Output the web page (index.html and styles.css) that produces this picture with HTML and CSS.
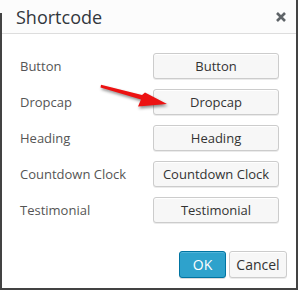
FILE: index.html
```html
<!DOCTYPE html>
<html lang="en">
<head>
    <meta charset="UTF-8">
    <meta name="viewport" content="width=device-width, initial-scale=1.0">
    <title>Shortcode</title>
    <link rel="stylesheet" href="styles.css">
</head>
<body>
    <div class="dialog">
        <div class="dialog-head">
            <h1>Shortcode</h1>
            <svg class="close" viewBox="0 0 10 10" width="10" height="10">
                <path d="M1 1 L9 9 M9 1 L1 9" stroke="#5f6468" stroke-width="2.6" stroke-linecap="butt"/>
            </svg>
        </div>

        <div class="dialog-body">
            <div class="row">
                <span class="label">Button</span>
                <button class="btn">Button</button>
            </div>
            <div class="row">
                <span class="label">Dropcap</span>
                <button class="btn">Dropcap</button>
            </div>
            <div class="row">
                <span class="label">Heading</span>
                <button class="btn">Heading</button>
            </div>
            <div class="row">
                <span class="label">Countdown Clock</span>
                <button class="btn">Countdown Clock</button>
            </div>
            <div class="row">
                <span class="label">Testimonial</span>
                <button class="btn">Testimonial</button>
            </div>
        </div>

        <div class="dialog-foot">
            <button class="btn btn-ok">OK</button>
            <button class="btn btn-cancel">Cancel</button>
        </div>

        <!-- red pointer arrow drawn over the dialog -->
        <svg class="arrow" viewBox="95 80 80 36" width="80" height="36">
            <polygon points="101,84.8 142,95 145,92.5 167,104 138,106.5 141,99.5 100.5,87.6" fill="#ec1212"/>
        </svg>
    </div>
</body>
</html>
```

FILE: styles.css
```css
body {
    margin: 0;
    background: linear-gradient(#fcfcfc, #fcfcfc) 0 0 / 2px 13px no-repeat, #434343;
    font-family: "Open Sans", Arial, sans-serif;
    width: 298px;
    height: 290px;
    overflow: hidden;
}
.dialog {
    position: relative;
    width: 294px;
    height: 288px;
    margin-left: 2px;
    background-color: #fff;
    display: flex;
    flex-direction: column;
}
.dialog-head {
    height: 33px;
    border-bottom: 1px solid #dddddd;
    background-color: #fcfcfc;
    display: flex;
    align-items: center;
    justify-content: space-between;
    padding: 0 10px 0 14px;
}
.dialog-head h1 {
    margin: 0;
    font-size: 18px;
    font-weight: 400;
    color: #32373c;
    line-height: 1;
    padding-top: 1px;
}
.close {
    display: block;
    margin-top: 1px;
}
.dialog-body {
    padding: 19px 17px 0 18px;
    display: flex;
    flex-direction: column;
    gap: 10px;
}
.row {
    display: grid;
    grid-template-columns: 1fr 126px;
    align-items: center;
    height: 26px;
}
.label {
    font-size: 13px;
    color: #555;
}
.btn {
    font-family: "Open Sans", Arial, sans-serif;
    font-size: 13px;
    color: #333;
    height: 26px;
    padding: 0;
    background-color: #f7f7f7;
    border: 1px solid #cccccc;
    border-radius: 3px;
    box-shadow: inset 0 1px 0 #fff, 0 1px 0 rgba(0, 0, 0, 0.08);
}
.dialog-foot {
    margin-top: auto;
    display: flex;
    justify-content: flex-end;
    gap: 3px;
    padding: 0 9px 10px 0;
}
.btn-ok {
    width: 47px;
    height: 27px;
    background-color: #2ea2cc;
    border-color: #0074a2;
    color: #fff;
    font-size: 14px;
    box-shadow: inset 0 1px 0 rgba(120, 200, 230, 0.5), 0 1px 0 rgba(0, 0, 0, 0.15);
}
.btn-cancel {
    width: 58px;
    height: 27px;
    font-size: 14px;
}
.arrow {
    position: absolute;
    left: 93px;
    top: 80px;
    filter: drop-shadow(1px 2px 1.5px rgba(0, 0, 0, 0.45));
}
```
